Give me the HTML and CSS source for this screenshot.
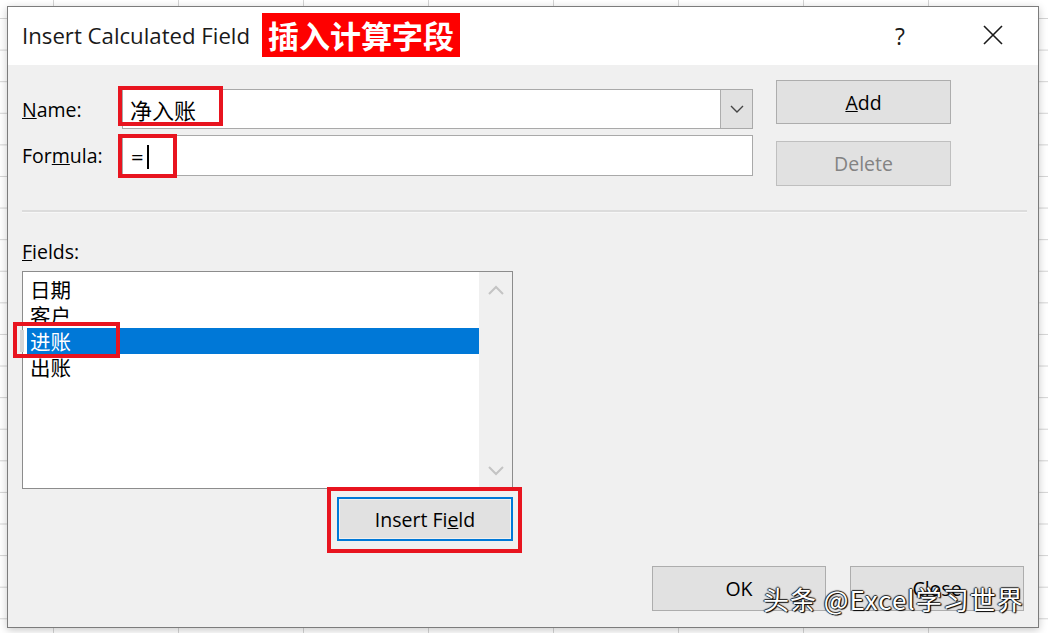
FILE: index.html
```html
<!DOCTYPE html>
<html lang="en">
<head>
  <meta charset="UTF-8" />
  <title>Insert Calculated Field</title>
  <link rel="stylesheet" href="styles.css">
</head>
<body>
  <div class="icf-dialog">
    <!-- Title bar -->
    <div class="icf-titlebar">
      <span class="icf-title">Insert Calculated Field</span>
      <span class="icf-tag">插入计算字段</span>
      <span class="icf-help">?</span>
      <span class="icf-close">
        <svg width="20" height="20" viewBox="0 0 20 20"><path d="M1 1 L19 19 M19 1 L1 19" stroke="#1a1a1a" stroke-width="1.6" fill="none"/></svg>
      </span>
    </div>

    <div class="icf-body">
      <!-- Name / Formula + Add / Delete -->
      <div class="icf-top">
        <div class="icf-form">
          <div class="icf-row">
            <label class="icf-label"><u>N</u>ame:</label>
            <div class="icf-combo">
              <span class="icf-value">净入账</span>
              <span class="icf-drop">
                <svg width="14" height="8" viewBox="0 0 14 8"><path d="M1 1 L7 7 L13 1" stroke="#444" stroke-width="1.4" fill="none"/></svg>
              </span>
              <span class="icf-mark icf-mark-name"></span>
            </div>
          </div>
          <div class="icf-row">
            <label class="icf-label">For<u>m</u>ula:</label>
            <div class="icf-textbox">
              <span class="icf-value">=</span><span class="icf-caret"></span>
              <span class="icf-mark icf-mark-formula"></span>
            </div>
          </div>
        </div>
        <div class="icf-side">
          <button class="icf-btn"><u>A</u>dd</button>
          <button class="icf-btn icf-disabled">Delete</button>
        </div>
      </div>

      <div class="icf-sep"></div>

      <!-- Fields list -->
      <div class="icf-fields">
        <label class="icf-label"><u>F</u>ields:</label>
        <div class="icf-listbox">
          <ul class="icf-list">
            <li>日期</li>
            <li>客户</li>
            <li class="icf-selected"><span class="icf-focus"></span>进账</li>
            <li>出账</li>
          </ul>
          <div class="icf-scroll">
            <svg width="16" height="10" viewBox="0 0 16 10"><path d="M1 9 L8 2 L15 9" stroke="#c4c4c4" stroke-width="2" fill="none"/></svg>
            <svg width="16" height="10" viewBox="0 0 16 10"><path d="M1 1 L8 8 L15 1" stroke="#c4c4c4" stroke-width="2" fill="none"/></svg>
          </div>
          <span class="icf-mark icf-mark-item"></span>
        </div>
        <button class="icf-btn icf-insert">Insert Fi<u>e</u>ld<span class="icf-mark icf-mark-insert"></span></button>
      </div>

      <!-- Footer -->
      <div class="icf-footer">
        <button class="icf-btn">OK</button>
        <button class="icf-btn">Close</button>
      </div>
    </div>

    <div class="icf-watermark">头条 @Excel学习世界</div>
  </div>
</body>
</html>
```

FILE: styles.css
```css
/* Excel sheet behind the dialog */
body {
  margin: 0;
  width: 1048px;
  height: 633px;
  overflow: hidden;
  background-color: #ffffff;
  background-image:
    linear-gradient(to right, #d4d4d4 1px, transparent 1px),
    linear-gradient(to bottom, #d4d4d4 1px, transparent 1px);
  background-size: 125px 31.6px;
  background-position: 53px 18px;
  font-family: "Open Sans", "Noto Sans CJK SC", sans-serif;
  color: #000;
}

.icf-dialog {
  position: relative;
  margin: 6px 0 0 7px;
  width: 1032px;
  height: 622px;
  box-sizing: border-box;
  border: 1px solid #7c7c7c;
  background: #f0f0f0;
  box-shadow: 0 2px 8px rgba(0, 0, 0, 0.22);
}

/* Title bar */
.icf-titlebar {
  height: 58px;
  background: #ffffff;
  display: flex;
  align-items: center;
  padding-left: 14px;
}

.icf-title {
  font-size: 22.2px;
  color: #1a1a1a;
  margin-top: -1px;
}

.icf-tag {
  margin-left: 12px;
  background: #fe0000;
  color: #ffffff;
  font-family: "Noto Sans CJK SC", sans-serif;
  font-weight: bold;
  font-size: 31px;
  line-height: 44px;
  height: 44px;
  padding: 0 6px;
  margin-top: -2px;
}

.icf-help {
  margin-left: auto;
  font-size: 23px;
  color: #1a1a1a;
  margin-right: 78px;
}

.icf-close {
  display: flex;
  margin-right: 35px;
  margin-top: -2px;
}

/* Body */
.icf-body {
  padding: 0 11px 0 14px;
}

.icf-top {
  display: flex;
  align-items: flex-start;
}

.icf-form {
  margin-top: 24px;
  display: flex;
  flex-direction: column;
  gap: 6px;
}

.icf-row {
  display: flex;
  align-items: center;
}

.icf-label {
  width: 100px;
  font-size: 19.5px;
}

.icf-combo,
.icf-textbox {
  position: relative;
  width: 631px;
  box-sizing: border-box;
  background: #ffffff;
  border: 1px solid #a9a9a9;
  display: flex;
  align-items: center;
}

.icf-combo {
  height: 40px;
}

.icf-textbox {
  height: 41px;
}

.icf-value {
  font-family: "Noto Sans CJK SC", sans-serif;
  font-size: 22px;
  padding-left: 7px;
}

.icf-textbox .icf-value {
  font-family: "Open Sans", sans-serif;
  padding-left: 8px;
}

.icf-caret {
  width: 2px;
  height: 24px;
  background: #000;
  margin-left: 3px;
  margin-top: 2px;
}

.icf-drop {
  margin-left: auto;
  width: 32px;
  height: 38px;
  box-sizing: border-box;
  border-left: 1px solid #adadad;
  background: #e1e1e1;
  display: flex;
  align-items: center;
  justify-content: center;
}

/* red annotation boxes */
.icf-mark {
  position: absolute;
  box-sizing: border-box;
  border: 4px solid #e8141f;
  pointer-events: none;
}

.icf-mark-name {
  left: -5px;
  top: -4px;
  width: 105px;
  height: 40px;
}

.icf-mark-formula {
  left: -5px;
  top: -2px;
  width: 59px;
  height: 44px;
}

.icf-mark-item {
  left: -10px;
  top: 50px;
  width: 107px;
  height: 36px;
}

.icf-mark-insert {
  left: -12px;
  top: -12px;
  width: 195px;
  height: 66px;
}

/* Buttons */
.icf-side {
  margin-left: 23px;
  margin-top: 15px;
  display: flex;
  flex-direction: column;
  gap: 17px;
}

.icf-btn {
  width: 175px;
  height: 45px;
  box-sizing: border-box;
  border: 1px solid #adadad;
  background: #e1e1e1;
  font-family: "Open Sans", sans-serif;
  font-size: 19.5px;
  color: #000;
  padding: 0;
}

.icf-side .icf-btn:first-child {
  height: 44px;
}

.icf-disabled {
  color: #838383;
  border-color: #bfbfbf;
}

.icf-sep {
  margin: 24px 0 0 0;
  height: 2px;
  background: #dcdcdc;
  border-bottom: 1px solid #f7f7f7;
}

/* Fields list */
.icf-fields {
  width: 491px;
  margin-top: 24px;
  display: flex;
  flex-direction: column;
}

.icf-fields .icf-label {
  line-height: 30px;
}

.icf-listbox {
  position: relative;
  margin-top: 4px;
  height: 218px;
  box-sizing: border-box;
  border: 1px solid #8c8c8c;
  background: #ffffff;
  display: flex;
}

.icf-list {
  list-style: none;
  margin: 0;
  padding: 4px 0 0 4px;
  flex: 1;
}

.icf-list li {
  position: relative;
  height: 26px;
  line-height: 26px;
  padding-left: 3px;
  font-family: "Noto Sans CJK SC", sans-serif;
  font-size: 20.5px;
}

.icf-selected {
  background: #0078d7;
  color: #ffffff;
}

.icf-focus {
  position: absolute;
  left: -7px;
  top: 2px;
  width: 4px;
  height: 22px;
  background: #d6d6d6;
}

.icf-scroll {
  width: 33px;
  background: #f0f0f0;
  display: flex;
  flex-direction: column;
  justify-content: space-between;
  align-items: center;
  padding: 13px 0 12px;
}

.icf-insert {
  position: relative;
  align-self: flex-end;
  margin-top: 8px;
  width: 176px;
  height: 44px;
  border: 2px solid #0078d7;
  box-shadow: inset 0 0 0 1px #f0f0f0;
}

.icf-footer {
  margin-top: 25px;
  display: flex;
  justify-content: flex-end;
  gap: 24px;
  padding-right: 3px;
}

.icf-footer .icf-btn {
  width: 174px;
}

/* watermark */
.icf-watermark {
  position: absolute;
  left: 755px;
  top: 573px;
  font-family: "Noto Sans CJK SC", sans-serif;
  font-size: 26px;
  letter-spacing: 1px;
  color: #ffffff;
  text-shadow: 1px 1px 1px #000, -1px 0 1px #222, 0 -1px 1px #222, 1px 0 1px #222;
  white-space: nowrap;
}
```
